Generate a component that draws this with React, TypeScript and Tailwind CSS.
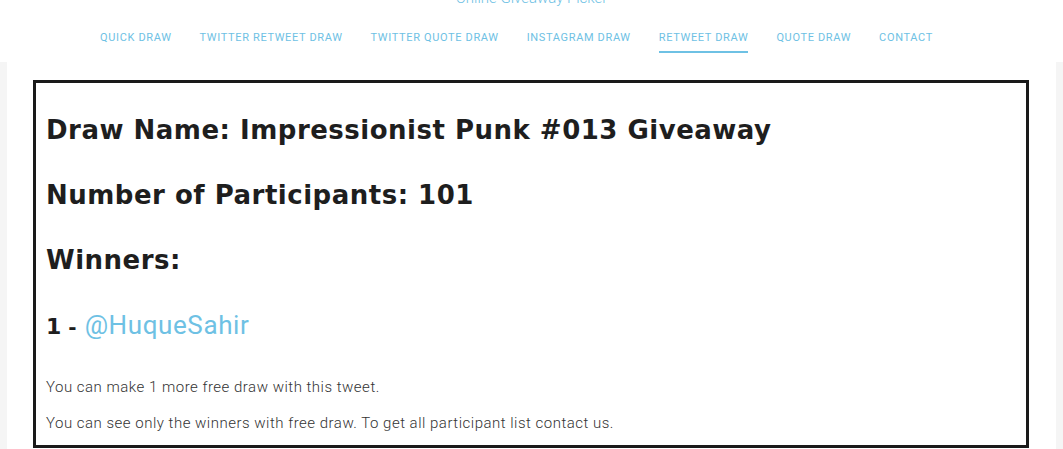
import React from "react";

const navItems = [
  "QUICK DRAW",
  "TWITTER RETWEET DRAW",
  "TWITTER QUOTE DRAW",
  "INSTAGRAM DRAW",
  "RETWEET DRAW",
  "QUOTE DRAW",
  "CONTACT",
];

export default function App() {
  const heading = "font-['DejaVu_Sans',sans-serif] font-bold text-[26px] leading-[36px] text-[#1e1e1e] tracking-[0.5px]";
  return (
    <div className="h-[449px] overflow-hidden bg-[#f5f5f5] font-['Roboto',sans-serif]">
      <header className="bg-white h-[62px] relative">
        <div className="absolute left-0 right-0 top-[-11px] text-center text-[15px] font-light text-[#6ec1e4] leading-[18px]">
          Online Giveaway Picker
        </div>
        <nav className="flex gap-[28px] pl-[100px] pt-[31px]">
          {navItems.map((item) => (
            <div
              key={item}
              className={`text-[11px] leading-[14px] tracking-[0.65px] text-[#6ec1e4] pb-[6px] ${
                item === "RETWEET DRAW" ? "border-b-2 border-[#6ec1e4]" : "border-b-2 border-transparent"
              }`}
            >
              {item}
            </div>
          ))}
        </nav>
      </header>
      <main className="mx-[7px] bg-white h-[400px] pt-[18px] pl-[26px] pr-[27px]">
        <div className="border-[3px] border-[#1a1a1a] h-[368px] pl-[10px] pt-[29px]">
          <div className="flex flex-col gap-[29px]">
            <h2 className={heading}>Draw Name: Impressionist Punk #013 Giveaway</h2>
            <h2 className={heading}>Number of Participants: 101</h2>
            <h2 className={heading}>Winners:</h2>
            <h3 className="text-[26px] leading-[36px] text-[#1e1e1e] flex items-baseline">
              <span className="font-['DejaVu_Sans',sans-serif] font-bold text-[22px]">1</span>
              <span className="font-['DejaVu_Sans',sans-serif] font-bold text-[20px] ml-[7px] mr-[8px]">-</span>
              <span className="font-['Roboto',sans-serif] text-[#6ec1e4] tracking-[0.6px]">@HuqueSahir</span>
            </h3>
          </div>
          <div className="mt-[31px] flex flex-col gap-[14px] text-[15px] leading-[22px] font-light text-[#333] tracking-[0.5px]">
            <p>You can make 1 more free draw with this tweet.</p>
            <p>You can see only the winners with free draw. To get all participant list contact us.</p>
          </div>
        </div>
      </main>
    </div>
  );
}
